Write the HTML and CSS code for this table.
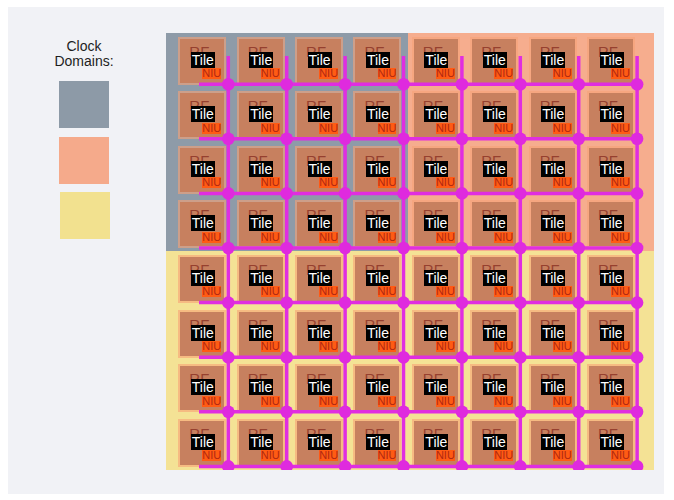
FILE: index.html
```html
<!DOCTYPE html>
<html>
<head>
<meta charset="utf-8">
<link rel="stylesheet" href="styles.css">
</head>
<body>
<div class="panel">
  <div class="legend">
    <div class="legend-title">Clock<br>Domains:</div>
    <div class="swatch sw-gray"></div>
    <div class="swatch sw-orange"></div>
    <div class="swatch sw-yellow"></div>
  </div>
  <div class="chip">
    <div class="domains">
      <div class="dom dom-gray"></div>
      <div class="dom dom-orange"></div>
      <div class="dom dom-yellow"></div>
    </div>
    <div class="tiles">
      <div class="tile"><div class="core"><span class="rf">RF</span><span class="tl">Tile</span><span class="niu">NIU</span></div></div>
      <div class="tile"><div class="core"><span class="rf">RF</span><span class="tl">Tile</span><span class="niu">NIU</span></div></div>
      <div class="tile"><div class="core"><span class="rf">RF</span><span class="tl">Tile</span><span class="niu">NIU</span></div></div>
      <div class="tile"><div class="core"><span class="rf">RF</span><span class="tl">Tile</span><span class="niu">NIU</span></div></div>
      <div class="tile"><div class="core"><span class="rf">RF</span><span class="tl">Tile</span><span class="niu">NIU</span></div></div>
      <div class="tile"><div class="core"><span class="rf">RF</span><span class="tl">Tile</span><span class="niu">NIU</span></div></div>
      <div class="tile"><div class="core"><span class="rf">RF</span><span class="tl">Tile</span><span class="niu">NIU</span></div></div>
      <div class="tile"><div class="core"><span class="rf">RF</span><span class="tl">Tile</span><span class="niu">NIU</span></div></div>

      <div class="tile"><div class="core"><span class="rf">RF</span><span class="tl">Tile</span><span class="niu">NIU</span></div></div>
      <div class="tile"><div class="core"><span class="rf">RF</span><span class="tl">Tile</span><span class="niu">NIU</span></div></div>
      <div class="tile"><div class="core"><span class="rf">RF</span><span class="tl">Tile</span><span class="niu">NIU</span></div></div>
      <div class="tile"><div class="core"><span class="rf">RF</span><span class="tl">Tile</span><span class="niu">NIU</span></div></div>
      <div class="tile"><div class="core"><span class="rf">RF</span><span class="tl">Tile</span><span class="niu">NIU</span></div></div>
      <div class="tile"><div class="core"><span class="rf">RF</span><span class="tl">Tile</span><span class="niu">NIU</span></div></div>
      <div class="tile"><div class="core"><span class="rf">RF</span><span class="tl">Tile</span><span class="niu">NIU</span></div></div>
      <div class="tile"><div class="core"><span class="rf">RF</span><span class="tl">Tile</span><span class="niu">NIU</span></div></div>

      <div class="tile"><div class="core"><span class="rf">RF</span><span class="tl">Tile</span><span class="niu">NIU</span></div></div>
      <div class="tile"><div class="core"><span class="rf">RF</span><span class="tl">Tile</span><span class="niu">NIU</span></div></div>
      <div class="tile"><div class="core"><span class="rf">RF</span><span class="tl">Tile</span><span class="niu">NIU</span></div></div>
      <div class="tile"><div class="core"><span class="rf">RF</span><span class="tl">Tile</span><span class="niu">NIU</span></div></div>
      <div class="tile"><div class="core"><span class="rf">RF</span><span class="tl">Tile</span><span class="niu">NIU</span></div></div>
      <div class="tile"><div class="core"><span class="rf">RF</span><span class="tl">Tile</span><span class="niu">NIU</span></div></div>
      <div class="tile"><div class="core"><span class="rf">RF</span><span class="tl">Tile</span><span class="niu">NIU</span></div></div>
      <div class="tile"><div class="core"><span class="rf">RF</span><span class="tl">Tile</span><span class="niu">NIU</span></div></div>

      <div class="tile"><div class="core"><span class="rf">RF</span><span class="tl">Tile</span><span class="niu">NIU</span></div></div>
      <div class="tile"><div class="core"><span class="rf">RF</span><span class="tl">Tile</span><span class="niu">NIU</span></div></div>
      <div class="tile"><div class="core"><span class="rf">RF</span><span class="tl">Tile</span><span class="niu">NIU</span></div></div>
      <div class="tile"><div class="core"><span class="rf">RF</span><span class="tl">Tile</span><span class="niu">NIU</span></div></div>
      <div class="tile"><div class="core"><span class="rf">RF</span><span class="tl">Tile</span><span class="niu">NIU</span></div></div>
      <div class="tile"><div class="core"><span class="rf">RF</span><span class="tl">Tile</span><span class="niu">NIU</span></div></div>
      <div class="tile"><div class="core"><span class="rf">RF</span><span class="tl">Tile</span><span class="niu">NIU</span></div></div>
      <div class="tile"><div class="core"><span class="rf">RF</span><span class="tl">Tile</span><span class="niu">NIU</span></div></div>

      <div class="tile"><div class="core"><span class="rf">RF</span><span class="tl">Tile</span><span class="niu">NIU</span></div></div>
      <div class="tile"><div class="core"><span class="rf">RF</span><span class="tl">Tile</span><span class="niu">NIU</span></div></div>
      <div class="tile"><div class="core"><span class="rf">RF</span><span class="tl">Tile</span><span class="niu">NIU</span></div></div>
      <div class="tile"><div class="core"><span class="rf">RF</span><span class="tl">Tile</span><span class="niu">NIU</span></div></div>
      <div class="tile"><div class="core"><span class="rf">RF</span><span class="tl">Tile</span><span class="niu">NIU</span></div></div>
      <div class="tile"><div class="core"><span class="rf">RF</span><span class="tl">Tile</span><span class="niu">NIU</span></div></div>
      <div class="tile"><div class="core"><span class="rf">RF</span><span class="tl">Tile</span><span class="niu">NIU</span></div></div>
      <div class="tile"><div class="core"><span class="rf">RF</span><span class="tl">Tile</span><span class="niu">NIU</span></div></div>

      <div class="tile"><div class="core"><span class="rf">RF</span><span class="tl">Tile</span><span class="niu">NIU</span></div></div>
      <div class="tile"><div class="core"><span class="rf">RF</span><span class="tl">Tile</span><span class="niu">NIU</span></div></div>
      <div class="tile"><div class="core"><span class="rf">RF</span><span class="tl">Tile</span><span class="niu">NIU</span></div></div>
      <div class="tile"><div class="core"><span class="rf">RF</span><span class="tl">Tile</span><span class="niu">NIU</span></div></div>
      <div class="tile"><div class="core"><span class="rf">RF</span><span class="tl">Tile</span><span class="niu">NIU</span></div></div>
      <div class="tile"><div class="core"><span class="rf">RF</span><span class="tl">Tile</span><span class="niu">NIU</span></div></div>
      <div class="tile"><div class="core"><span class="rf">RF</span><span class="tl">Tile</span><span class="niu">NIU</span></div></div>
      <div class="tile"><div class="core"><span class="rf">RF</span><span class="tl">Tile</span><span class="niu">NIU</span></div></div>

      <div class="tile"><div class="core"><span class="rf">RF</span><span class="tl">Tile</span><span class="niu">NIU</span></div></div>
      <div class="tile"><div class="core"><span class="rf">RF</span><span class="tl">Tile</span><span class="niu">NIU</span></div></div>
      <div class="tile"><div class="core"><span class="rf">RF</span><span class="tl">Tile</span><span class="niu">NIU</span></div></div>
      <div class="tile"><div class="core"><span class="rf">RF</span><span class="tl">Tile</span><span class="niu">NIU</span></div></div>
      <div class="tile"><div class="core"><span class="rf">RF</span><span class="tl">Tile</span><span class="niu">NIU</span></div></div>
      <div class="tile"><div class="core"><span class="rf">RF</span><span class="tl">Tile</span><span class="niu">NIU</span></div></div>
      <div class="tile"><div class="core"><span class="rf">RF</span><span class="tl">Tile</span><span class="niu">NIU</span></div></div>
      <div class="tile"><div class="core"><span class="rf">RF</span><span class="tl">Tile</span><span class="niu">NIU</span></div></div>

      <div class="tile"><div class="core"><span class="rf">RF</span><span class="tl">Tile</span><span class="niu">NIU</span></div></div>
      <div class="tile"><div class="core"><span class="rf">RF</span><span class="tl">Tile</span><span class="niu">NIU</span></div></div>
      <div class="tile"><div class="core"><span class="rf">RF</span><span class="tl">Tile</span><span class="niu">NIU</span></div></div>
      <div class="tile"><div class="core"><span class="rf">RF</span><span class="tl">Tile</span><span class="niu">NIU</span></div></div>
      <div class="tile"><div class="core"><span class="rf">RF</span><span class="tl">Tile</span><span class="niu">NIU</span></div></div>
      <div class="tile"><div class="core"><span class="rf">RF</span><span class="tl">Tile</span><span class="niu">NIU</span></div></div>
      <div class="tile"><div class="core"><span class="rf">RF</span><span class="tl">Tile</span><span class="niu">NIU</span></div></div>
      <div class="tile"><div class="core"><span class="rf">RF</span><span class="tl">Tile</span><span class="niu">NIU</span></div></div>
    </div>
    <svg class="noc" width="488" height="437" viewBox="0 0 488 437" xmlns="http://www.w3.org/2000/svg">
      <g class="links">
        <line x1="33" y1="51.2" x2="471.1" y2="51.2"/>
        <line x1="33" y1="105.8" x2="471.1" y2="105.8"/>
        <line x1="33" y1="160.4" x2="471.1" y2="160.4"/>
        <line x1="33" y1="215" x2="471.1" y2="215"/>
        <line x1="33" y1="269.6" x2="471.1" y2="269.6"/>
        <line x1="33" y1="324.2" x2="471.1" y2="324.2"/>
        <line x1="33" y1="378.8" x2="471.1" y2="378.8"/>
        <line x1="33" y1="433.4" x2="471.1" y2="433.4"/>
        <line x1="62.3" y1="23" x2="62.3" y2="433.4"/>
        <line x1="120.7" y1="23" x2="120.7" y2="433.4"/>
        <line x1="179.1" y1="23" x2="179.1" y2="433.4"/>
        <line x1="237.5" y1="23" x2="237.5" y2="433.4"/>
        <line x1="295.9" y1="23" x2="295.9" y2="433.4"/>
        <line x1="354.3" y1="23" x2="354.3" y2="433.4"/>
        <line x1="412.7" y1="23" x2="412.7" y2="433.4"/>
        <line x1="471.1" y1="23" x2="471.1" y2="433.4"/>
      </g>
      <g class="routers">
        <circle cx="62.3" cy="51.2" r="6.3"/><circle cx="120.7" cy="51.2" r="6.3"/><circle cx="179.1" cy="51.2" r="6.3"/><circle cx="237.5" cy="51.2" r="6.3"/><circle cx="295.9" cy="51.2" r="6.3"/><circle cx="354.3" cy="51.2" r="6.3"/><circle cx="412.7" cy="51.2" r="6.3"/><circle cx="471.1" cy="51.2" r="6.3"/>
        <circle cx="62.3" cy="105.8" r="6.3"/><circle cx="120.7" cy="105.8" r="6.3"/><circle cx="179.1" cy="105.8" r="6.3"/><circle cx="237.5" cy="105.8" r="6.3"/><circle cx="295.9" cy="105.8" r="6.3"/><circle cx="354.3" cy="105.8" r="6.3"/><circle cx="412.7" cy="105.8" r="6.3"/><circle cx="471.1" cy="105.8" r="6.3"/>
        <circle cx="62.3" cy="160.4" r="6.3"/><circle cx="120.7" cy="160.4" r="6.3"/><circle cx="179.1" cy="160.4" r="6.3"/><circle cx="237.5" cy="160.4" r="6.3"/><circle cx="295.9" cy="160.4" r="6.3"/><circle cx="354.3" cy="160.4" r="6.3"/><circle cx="412.7" cy="160.4" r="6.3"/><circle cx="471.1" cy="160.4" r="6.3"/>
        <circle cx="62.3" cy="215" r="6.3"/><circle cx="120.7" cy="215" r="6.3"/><circle cx="179.1" cy="215" r="6.3"/><circle cx="237.5" cy="215" r="6.3"/><circle cx="295.9" cy="215" r="6.3"/><circle cx="354.3" cy="215" r="6.3"/><circle cx="412.7" cy="215" r="6.3"/><circle cx="471.1" cy="215" r="6.3"/>
        <circle cx="62.3" cy="269.6" r="6.3"/><circle cx="120.7" cy="269.6" r="6.3"/><circle cx="179.1" cy="269.6" r="6.3"/><circle cx="237.5" cy="269.6" r="6.3"/><circle cx="295.9" cy="269.6" r="6.3"/><circle cx="354.3" cy="269.6" r="6.3"/><circle cx="412.7" cy="269.6" r="6.3"/><circle cx="471.1" cy="269.6" r="6.3"/>
        <circle cx="62.3" cy="324.2" r="6.3"/><circle cx="120.7" cy="324.2" r="6.3"/><circle cx="179.1" cy="324.2" r="6.3"/><circle cx="237.5" cy="324.2" r="6.3"/><circle cx="295.9" cy="324.2" r="6.3"/><circle cx="354.3" cy="324.2" r="6.3"/><circle cx="412.7" cy="324.2" r="6.3"/><circle cx="471.1" cy="324.2" r="6.3"/>
        <circle cx="62.3" cy="378.8" r="6.3"/><circle cx="120.7" cy="378.8" r="6.3"/><circle cx="179.1" cy="378.8" r="6.3"/><circle cx="237.5" cy="378.8" r="6.3"/><circle cx="295.9" cy="378.8" r="6.3"/><circle cx="354.3" cy="378.8" r="6.3"/><circle cx="412.7" cy="378.8" r="6.3"/><circle cx="471.1" cy="378.8" r="6.3"/>
        <circle cx="62.3" cy="433.4" r="6.3"/><circle cx="120.7" cy="433.4" r="6.3"/><circle cx="179.1" cy="433.4" r="6.3"/><circle cx="237.5" cy="433.4" r="6.3"/><circle cx="295.9" cy="433.4" r="6.3"/><circle cx="354.3" cy="433.4" r="6.3"/><circle cx="412.7" cy="433.4" r="6.3"/><circle cx="471.1" cy="433.4" r="6.3"/>
      </g>
    </svg>
  </div>
</div>
</body>
</html>
```

FILE: styles.css
```css
html, body {
  margin: 0;
  padding: 0;
  background: #ffffff;
}

body {
  padding: 7px 10px 6px 8px;
  font-family: "Liberation Sans", Arial, sans-serif;
}

.panel {
  width: 656px;
  height: 487px;
  background: #f1f2f6;
  display: flex;
  align-items: flex-start;
}

.legend {
  width: 152px;
  margin-top: 32px;
  display: flex;
  flex-direction: column;
  align-items: center;
}

.legend-title {
  font-size: 14px;
  line-height: 15px;
  color: #1e1e1e;
  text-align: center;
  margin-bottom: 12px;
}

.swatch {
  width: 50px;
  height: 47px;
  margin-bottom: 8.5px;
}

.sw-gray { background: #8d9aa7; }
.sw-orange { background: #f5aa8b; }
.sw-yellow { background: #f2e18f; margin-left: 1px; }

.chip {
  margin-left: 6px;
  margin-top: 26px;
  width: 488px;
  height: 437px;
  display: grid;
}

.domains,
.tiles,
.noc {
  grid-area: 1 / 1;
}

.domains {
  display: grid;
  grid-template-columns: 242px 246px;
  grid-template-rows: 218px 219px;
}

.dom-gray { background: #8e9ba8; }
.dom-orange { background: #f6ad8e; }
.dom-yellow { background: #f4e295; grid-column: 1 / 3; }

.tiles {
  display: grid;
  box-sizing: border-box;
  padding: 3.7px 0 0 12.3px;
  grid-template-columns: repeat(8, 48px);
  grid-template-rows: repeat(8, 48px);
  column-gap: 10.4px;
  row-gap: 6.6px;
}

.tile {
  box-sizing: border-box;
  padding: 2px;
  background: rgba(246, 162, 118, 0.6);
}

.core {
  height: 100%;
  background: #c7805f;
  display: grid;
  overflow: hidden;
}

.core > span {
  grid-area: 1 / 1;
}

.rf {
  justify-self: start;
  align-self: start;
  margin: 5px 0 0 9px;
  font-size: 15px;
  line-height: 15px;
  color: #96402f;
}

.tl {
  justify-self: start;
  align-self: start;
  margin: 13px 0 0 10.5px;
  padding: 0 1px;
  background: #000000;
  color: #ffffff;
  font-size: 14px;
  line-height: 16px;
}

.niu {
  justify-self: end;
  align-self: end;
  margin: 0 3px 3.7px 0;
  background: #ff5b14;
  color: #b02812;
  font-size: 11px;
  line-height: 11px;
}

.noc {
  display: block;
}

.links line {
  stroke: #e02ee0;
  stroke-width: 3.5;
}

.routers circle {
  fill: #df2ade;
}
```
